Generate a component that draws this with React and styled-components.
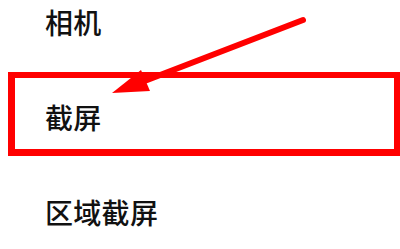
import React from 'react';
import styled, { createGlobalStyle } from 'styled-components';

const GlobalStyle = createGlobalStyle`
  html, body {
    margin: 0;
    padding: 0;
    background: #ffffff;
    overflow: hidden;
  }
`;

const Screen = styled.div`
  position: relative;
  width: 400px;
  height: 249px;
  overflow: hidden;
  background: #ffffff;
`;

const Menu = styled.ul`
  list-style: none;
  margin: -26px 0 0;
  padding: 0 0 0 45px;
  display: flex;
  flex-direction: column;
`;

const Item = styled.li`
  height: 95px;
  display: flex;
  align-items: center;
  font-family: "Noto Sans CJK SC", "Noto Sans", sans-serif;
  font-size: 28px;
  font-weight: 500;
  color: #111111;
  letter-spacing: 0.3px;
`;

const Highlight = styled.div`
  position: absolute;
  left: 8px;
  right: 0;
  top: 72px;
  height: 84px;
  box-sizing: border-box;
  border: 6px solid #ff0000;
  border-left-width: 7px;
  border-bottom-width: 7px;
  border-right-width: 6px;
  pointer-events: none;
`;

const Arrow = styled.svg`
  position: absolute;
  left: 0;
  top: 0;
  pointer-events: none;
`;

const items = ['相机', '截屏', '区域截屏'];

export default function App() {
  return (
    <Screen>
      <GlobalStyle />
      <Menu>
        {items.map((label) => (
          <Item key={label}>{label}</Item>
        ))}
      </Menu>
      <Highlight />
      <Arrow width="400" height="249" viewBox="0 0 400 249">
        <line x1="303" y1="20" x2="142" y2="82" stroke="#ff0000" strokeWidth="6" strokeLinecap="round" />
        <polygon points="112,93 141,70 150,91" fill="#ff0000" />
      </Arrow>
    </Screen>
  );
}
